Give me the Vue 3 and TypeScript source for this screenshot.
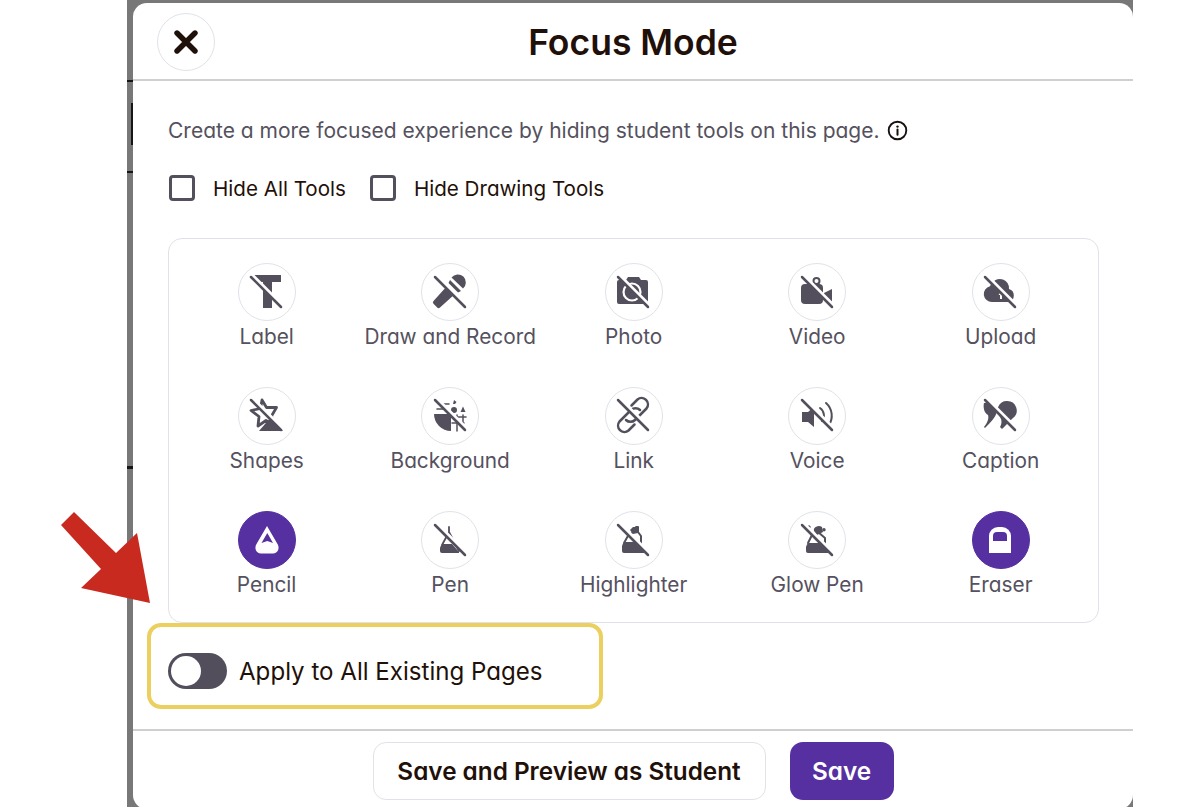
<template>
  <div class="frame">
    <span class="mark mark-a"></span>
    <span class="mark mark-b"></span>
    <span class="mark mark-c"></span>
    <span class="mark mark-v"></span>

    <div class="modal">
      <div class="modal-header">
        <button class="close-btn" type="button" aria-label="Close">
          <svg width="24" height="24" viewBox="0 0 24 24">
            <path d="M3 3l18 18M21 3L3 21" fill="none" stroke="#1f110a" stroke-width="5.4" stroke-linecap="round" />
          </svg>
        </button>
        <h1 class="modal-title">Focus Mode</h1>
      </div>

      <div class="modal-body">
        <p class="desc">
          Create a more focused experience by hiding student tools on this page.
          <svg class="info" width="21" height="21" viewBox="0 0 21 21">
            <circle cx="10.5" cy="10.5" r="8.8" fill="none" stroke="#16110f" stroke-width="1.9" />
            <path d="M10.5 9.5v5.2" stroke="#16110f" stroke-width="2" stroke-linecap="round" />
            <circle cx="10.5" cy="6.6" r="1.2" fill="#16110f" />
          </svg>
        </p>

        <div class="checks">
          <label class="check" v-for="c in checks" :key="c">
            <span class="box"></span>
            <span>{{ c }}</span>
          </label>
        </div>

        <div class="tool-panel">
          <div class="tool" v-for="tool in tools" :key="tool.name">
            <div class="tool-icon" :class="{ active: tool.active }">
              <svg width="58" height="58" viewBox="0 0 58 58">
                <path
                  v-for="(p, i) in tool.paths"
                  :key="i"
                  :d="p.d"
                  :fill="p.line ? 'none' : (p.color || (tool.active ? '#fff' : ink))"
                  :stroke="p.line ? (p.color || ink) : 'none'"
                  :stroke-width="p.line || 0"
                  stroke-linecap="round"
                  stroke-linejoin="round"
                />
                <template v-if="!tool.active">
                  <line :x1="14" :y1="tool.slashY" :x2="44" :y2="tool.slashY + 30" stroke="#fff" stroke-width="4.5" transform="translate(1.2 -1.2)" />
                  <line :x1="14" :y1="tool.slashY" :x2="44" :y2="tool.slashY + 30" :stroke="ink" stroke-width="2.5" stroke-linecap="round" />
                </template>
              </svg>
            </div>
            <span class="tool-name">{{ tool.name }}</span>
          </div>
        </div>

        <div class="apply-row">
          <span class="toggle"><span class="knob"></span></span>
          <span class="apply-label">Apply to All Existing Pages</span>
        </div>
      </div>

      <div class="modal-footer">
        <button class="btn btn-outline" type="button">Save and Preview as Student</button>
        <button class="btn btn-save" type="button">Save</button>
      </div>
    </div>
  </div>

  <svg class="arrow" width="1200" height="807" viewBox="0 0 1200 807">
    <path d="M61 525L74 512L116 553L137 533L150 603L81 588L101 569Z" fill="#c92a20" />
  </svg>
</template>

<script setup lang="ts">
interface IconPath {
  d: string;
  line?: number;
  color?: string;
}

interface Tool {
  name: string;
  slashY: number;
  active?: boolean;
  paths: IconPath[];
}

const ink = '#534f5c';
const purple = '#5630a0';

const checks = ['Hide All Tools', 'Hide Drawing Tools'];

const tools: Tool[] = [
  { name: 'Label', slashY: 15, paths: [{ d: 'M17 13h27v7h-9v26h-9V20h-9z' }] },
  {
    name: 'Draw and Record',
    slashY: 15,
    paths: [
      { d: 'M30.5 15.5a8 8 0 1 1 11.5 11L30.5 15.5z' },
      { d: 'M29 18l11 11-3 1.5-9.500-9.500z' },
      { d: 'M26.500 23.500l8 8L19 45.500a2 2 0 0 1-2.800 0l-3.700-3.700a2 2 0 0 1 0-2.800z' },
    ],
  },
  {
    name: 'Photo',
    slashY: 15,
    paths: [
      { d: 'M13 20a2 2 0 0 1 2-2h7l2-3h11l2 3h5a2 2 0 0 1 2 2v20a2 2 0 0 1-2 2H15a2 2 0 0 1-2-2z' },
      { d: 'M28 21.500a8.500 8.500 0 1 0 0 17a8.500 8.500 0 1 0 0-17z', line: 2.2, color: '#fff' },
    ],
  },
  {
    name: 'Video',
    slashY: 15,
    paths: [
      { d: 'M13 26a4 4 0 0 1 4-4h14a4 4 0 0 1 4 4v12a4 4 0 0 1-4 4H17a4 4 0 0 1-4-4z' },
      { d: 'M36 31l8-4v13l-8-4z' },
      { d: 'M28.500 16a3 3 0 1 0 0 6a3 3 0 1 0 0-6z', line: 2 },
    ],
  },
  {
    name: 'Upload',
    slashY: 15,
    paths: [
      { d: 'M21 40a8 8 0 0 1-2-15.800A10.500 10.500 0 0 1 32 17.500a9 9 0 0 1 6 9.500a6.800 6.800 0 0 1 0 13z' },
      { d: 'M30 29l-2.500 4h1.500v4h2v-4h1.500z', color: '#fff' },
    ],
  },
  {
    name: 'Shapes',
    slashY: 14,
    paths: [
      { d: 'M25 14l4.500 7.500 10 0-5 8.500 3 9-8.500-4.500-8 5.500 1-9.500-8-6 9.500-2z', line: 2.800 },
      { d: 'M34 31l12 14H22z' },
    ],
  },
  {
    name: 'Background',
    slashY: 14,
    paths: [
      { d: 'M13 28h17v17A17 17 0 0 1 13 28z' },
      { d: 'M33 14l2.500 2-1.500 2h-2z' },
      { d: 'M33 21a3 3 0 1 0 0 6a3 3 0 1 0 0-6z' },
      { d: 'M42 20.500l2.500 5.500h-5z' },
      { d: 'M31 31h14M31 37h12M36 29v16M42 29v10', line: 1.500 },
      { d: 'M20 18h8M16 23h10', line: 1.500 },
    ],
  },
  {
    name: 'Link',
    slashY: 14,
    paths: [
      { d: 'M27.500 19.500l6-6a6.400 6.400 0 0 1 9 9L31 34a6.400 6.400 0 0 1-9 0', line: 2.500 },
      { d: 'M30.500 38.500l-6 6a6.400 6.400 0 0 1-9-9L27 24a6.400 6.400 0 0 1 9 0', line: 2.500 },
    ],
  },
  {
    name: 'Voice',
    slashY: 14,
    paths: [
      { d: 'M14 26h6l6-5v20l-6-5h-6z' },
      { d: 'M32 22a9 9 0 0 1 2 13', line: 2 },
      { d: 'M38 17a17 17 0 0 1 3 22', line: 2 },
    ],
  },
  {
    name: 'Caption',
    slashY: 14,
    paths: [
      { d: 'M36 15a9.500 9.500 0 0 1 6 17C38 36 35 39 31 43l-2-2c2-4 2-7 0-10a9.500 9.500 0 0 1 7-16z' },
      { d: 'M13 17c7-2 13 2 13 7c0 6-6 12-12 18l-1-1c4-5 5-9 4-12c-4-2-5-8-4-12z' },
    ],
  },
  {
    name: 'Pencil',
    slashY: 0,
    active: true,
    paths: [
      { d: 'M30 16l10.500 18c2.500 4 .5 9.500-4.500 9.500H24c-5 0-7-5.500-4.500-9.500z' },
      { d: 'M30.300 23L24.500 33l5.800-2 5.700 2z', color: purple },
    ],
  },
  {
    name: 'Pen',
    slashY: 15,
    paths: [
      { d: 'M28 17v5M28 22l-7 13M28 22l10 19', line: 1.800 },
      { d: 'M22 34h9l7 8v1H21a2 2 0 0 1-2-2v-3a5 5 0 0 1 3-4z' },
    ],
  },
  {
    name: 'Highlighter',
    slashY: 15,
    paths: [
      { d: 'M28 23l4-6h2v5l3 4v8', line: 2 },
      { d: 'M25 24l-5 9', line: 2 },
      { d: 'M21 32h14l6 8v3H20a2 2 0 0 1-2-2v-5a5 5 0 0 1 3-4z' },
      { d: 'M26 20l3-3 4 0 1 6-5 1z' },
    ],
  },
  {
    name: 'Glow Pen',
    slashY: 15,
    paths: [
      { d: 'M30 22l7 6v8', line: 2 },
      { d: 'M24 25l-4 8', line: 2 },
      { d: 'M21 33h14l6 7v3H20a2 2 0 0 1-2-2v-4a5 5 0 0 1 3-4z' },
      { d: 'M26 21a5 4 0 0 1 8-4l1 5-6 3z' },
      { d: 'M21 15l2 2-2 2-2-2z' },
      { d: 'M36 18a1.700 1.700 0 1 0 0 3.400a1.700 1.700 0 1 0 0-3.400z' },
    ],
  },
  {
    name: 'Eraser',
    slashY: 0,
    active: true,
    paths: [
      { d: 'M18 26a9 9 0 0 1 9-9h4a9 9 0 0 1 9 9v17H18z' },
      { d: 'M22 31v-5a4 4 0 0 1 4-4h6a4 4 0 0 1 4 4v5z', color: purple },
    ],
  },
];
</script>

<style scoped>
.frame {
  position: relative;
  width: 1006px;
  height: 807px;
  margin-left: 127px;
  padding: 3px 0 0 6px;
  box-sizing: border-box;
  background: #787878;
  overflow: hidden;
}

.mark {
  position: absolute;
  left: 0;
  width: 6px;
  height: 2px;
  background: #151515;
}

.mark-a { top: 80px; }
.mark-b { top: 171px; }
.mark-c { top: 466px; height: 3px; }
.mark-v { top: 103px; left: 4px; width: 2px; height: 42px; }

.modal {
  display: flex;
  flex-direction: column;
  height: 806px;
  background: #fff;
  border-radius: 14px;
  font-family: Inter, "Noto Sans", sans-serif;
  font-feature-settings: "cv11" 1;
}

.modal-header {
  position: relative;
  display: flex;
  align-items: center;
  justify-content: center;
  flex-shrink: 0;
  height: 78px;
  box-sizing: border-box;
  border-bottom: 2px solid #cfcfd3;
}

.close-btn {
  position: absolute;
  left: 24px;
  top: 10px;
  display: flex;
  align-items: center;
  justify-content: center;
  width: 58px;
  height: 58px;
  padding: 0;
  background: #fff;
  border: 1.5px solid #dfe3e8;
  border-radius: 50%;
  cursor: pointer;
}

.modal-title {
  margin: 2px 0 0;
  font-size: 35.500px;
  font-weight: 600;
  color: #1f110a;
}

.modal-body {
  padding: 34px 34px 0 35px;
}

.desc {
  display: flex;
  align-items: center;
  gap: 7px;
  margin: 0;
  height: 30px;
  font-size: 21px;
  color: #55515e;
  white-space: nowrap;
}

.checks {
  display: flex;
  gap: 23px;
  margin-top: 30px;
  height: 26px;
}

.check {
  display: flex;
  align-items: center;
  gap: 18px;
  font-size: 20.600px;
  color: #1f110a;
}

.box {
  width: 26px;
  height: 26px;
  margin-left: 1px;
  box-sizing: border-box;
  border: 3px solid #534f5c;
  border-radius: 4px;
  background: #fff;
}

.tool-panel {
  display: grid;
  grid-template-columns: repeat(5, 1fr);
  grid-auto-rows: 124px;
  height: 385px;
  margin-top: 37px;
  padding: 23.500px 5.600px 0 5.900px;
  box-sizing: border-box;
  border: 1.5px solid #dfe2ea;
  border-radius: 14px;
}

.tool {
  display: flex;
  flex-direction: column;
  align-items: center;
}

.tool-icon {
  width: 58px;
  height: 58px;
  box-sizing: border-box;
  border: 1.5px solid #dfe3e8;
  border-radius: 50%;
  background: #fff;
}

.tool-icon svg {
  display: block;
  margin: -1.5px;
}

.tool-icon.active {
  background: #5630a0;
  border-color: #5630a0;
}

.tool-name {
  font-size: 20.800px;
  line-height: 32px;
  color: #55515e;
  white-space: nowrap;
}

.apply-row {
  display: flex;
  align-items: center;
  gap: 12px;
  width: 456px;
  height: 86px;
  margin-left: -21px;
  padding: 9px 0 0 17px;
  box-sizing: border-box;
  border: 4px solid #ecd05f;
  border-radius: 14px;
}

.toggle {
  display: flex;
  align-items: center;
  width: 59px;
  height: 36px;
  padding-left: 3px;
  box-sizing: border-box;
  border-radius: 18px;
  background: #524e5c;
}

.knob {
  width: 30px;
  height: 30px;
  border-radius: 50%;
  background: #fff;
}

.apply-label {
  margin-top: 2px;
  font-size: 24.100px;
  color: #1f110a;
  white-space: nowrap;
}

.modal-footer {
  display: flex;
  justify-content: center;
  gap: 24px;
  flex-shrink: 0;
  height: 80px;
  margin-top: auto;
  padding-top: 11px;
  box-sizing: border-box;
  border-top: 2px solid #cfcfd3;
}

.btn {
  height: 58px;
  border-radius: 13px;
  font-family: inherit;
  font-feature-settings: inherit;
  font-size: 24.300px;
  font-weight: 600;
  cursor: pointer;
}

.btn-outline {
  width: 393px;
  background: #fff;
  border: 1.5px solid #dfe3e8;
  color: #1f110a;
}

.btn-save {
  width: 104px;
  background: #5630a0;
  border: 0;
  color: #fff;
}

.arrow {
  position: absolute;
  left: 0;
  top: 0;
  pointer-events: none;
}
</style>

<style>
html,
body {
  background: #fff;
  overflow: hidden;
}
</style>
